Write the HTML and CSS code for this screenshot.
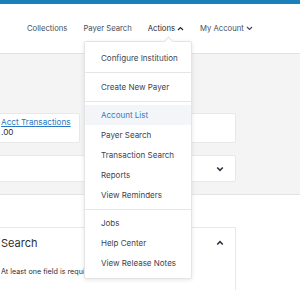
FILE: index.html
```html
<!DOCTYPE html>
<html>
<head>
<meta charset="utf-8">
<link rel="stylesheet" href="styles.css">
</head>
<body>
<div class="page">
  <div class="topbar"></div>
  <header class="header">
    <nav class="nav">
      <a class="nav-item">Collections</a>
      <a class="nav-item">Payer Search</a>
      <a class="nav-item active">Actions
        <svg class="chev" width="7" height="5" viewBox="0 0 7 5"><path d="M1 4 L3.5 1.5 L6 4" fill="none" stroke="currentColor" stroke-width="1.2"/></svg>
      </a>
      <a class="nav-item">My Account
        <svg class="chev" width="7" height="5" viewBox="0 0 7 5"><path d="M1 1 L3.5 3.5 L6 1" fill="none" stroke="currentColor" stroke-width="1.2"/></svg>
      </a>
    </nav>
  </header>

  <section class="grey">
    <div class="content">
      <div class="card-row">
        <div class="card small">
          <a class="link">Acct Transactions</a>
          <div class="amount">.00</div>
        </div>
        <div class="card grow"></div>
      </div>
      <div class="card wide">
        <span></span>
        <svg class="card-chev" width="8" height="6" viewBox="0 0 8 6"><path d="M1.2 1.5 L4 4.3 L6.8 1.5" fill="none" stroke="#2f3440" stroke-width="1.6"/></svg>
      </div>
    </div>
  </section>

  <section class="white">
    <div class="content">
      <div class="search-card">
        <div class="search-head">
          <h2 class="search-title">Search</h2>
          <svg class="card-chev" width="8" height="6" viewBox="0 0 8 6"><path d="M1.2 4.5 L4 1.7 L6.8 4.5" fill="none" stroke="#2f3440" stroke-width="1.6"/></svg>
        </div>
        <p class="hint">At least one field is required</p>
      </div>
    </div>
  </section>

  <div class="dropdown">
    <div class="caret"></div>
    <ul class="group first">
      <li>Configure Institution</li>
    </ul>
    <ul class="group second">
      <li>Create New Payer</li>
    </ul>
    <ul class="group third">
      <li class="selected">Account List</li>
      <li>Payer Search</li>
      <li>Transaction Search</li>
      <li>Reports</li>
      <li>View Reminders</li>
    </ul>
    <ul class="group fourth">
      <li>Jobs</li>
      <li>Help Center</li>
      <li>View Release Notes</li>
    </ul>
  </div>
</div>
</body>
</html>
```

FILE: styles.css
```css
* { box-sizing: border-box; }
html, body { margin: 0; padding: 0; }
body {
  width: 300px;
  height: 290px;
  overflow: hidden;
  font-family: "Inter", "Liberation Sans", sans-serif;
  font-size: 7.8px;
  color: #3c424e;
  background: #fff;
}
.page { position: relative; width: 300px; height: 290px; overflow: hidden; }

.topbar { height: 4px; background: #1b7fb9; }

.header {
  height: 50px;
  border-bottom: 1px solid #e2e2e2;
  display: flex;
  align-items: center;
  padding-left: 27px;
}
.nav { display: flex; align-items: center; gap: 16px; font-size: 7.7px; }
.nav-item {
  display: flex;
  align-items: center;
  gap: 2px;
  color: #464c58;
  white-space: nowrap;
}
.nav-item.active { color: #23272f; }
.chev { display: block; }

.grey {
  background: #f4f4f4;
  border-bottom: 1px solid #e4e4e4;
  padding: 59px 0 12px;
}
.content { margin-left: -10px; width: 246px; }

.card-row { display: flex; gap: 12px; }
.card {
  background: #fff;
  border: 1px solid #e8e8e8;
  border-radius: 2px;
}
.card.small {
  width: 90px;
  height: 30px;
  padding: 3px 0 0 10px;
  line-height: 10px;
}
.card.grow { flex: 1; height: 30px; }
.link { color: #2a78c3; text-decoration: underline; white-space: nowrap; font-size: 8.2px; }
.amount { color: #2c3038; font-size: 8.2px; }

.card.wide {
  margin-top: 12px;
  height: 27px;
  display: flex;
  align-items: center;
  justify-content: space-between;
  padding: 0 11px 0 10px;
}
.card-chev { display: block; }

.white { padding-top: 32px; }
.search-card {
  border: 1px solid #e8e8e8;
  border-bottom: none;
  height: 80px;
  padding: 0 11px 0 10px;
}
.search-head {
  display: flex;
  align-items: center;
  justify-content: space-between;
  height: 30px;
}
.search-title {
  margin: 0;
  font-size: 11px;
  font-weight: 400;
  color: #2c3038;
}
.hint {
  margin: 9px 0 0;
  font-size: 7.2px;
  color: #2c3038;
  white-space: nowrap;
}

.dropdown {
  position: absolute;
  left: 84px;
  top: 41px;
  width: 108px;
  height: 238px;
  background: #fff;
  border: 1px solid #e4e4e4;
  border-radius: 2px;
  box-shadow: 0 1px 4px rgba(0, 0, 0, 0.1);
  font-size: 8px;
}
.caret {
  position: absolute;
  left: 80px;
  top: -4px;
  width: 7px;
  height: 7px;
  background: #fff;
  border-left: 1px solid #e4e4e4;
  border-top: 1px solid #e4e4e4;
  transform: rotate(45deg);
}
.group {
  list-style: none;
  margin: 0;
  padding: 3px 0 4px;
  border-bottom: 1px solid #e6e6e6;
}
.group li {
  height: 20px;
  line-height: 20px;
  padding-left: 16px;
  white-space: nowrap;
  color: #3d434f;
}
.group.first { padding: 6px 0 4px; }
.group.second { padding: 3.5px 0 4px; }
.group.third { padding: 3px 0 4px; }
.group.fourth { padding: 3px 0 5px; border-bottom: none; }
.group li.selected { background: #f3f5f8; color: #2f7bc4; }
```
